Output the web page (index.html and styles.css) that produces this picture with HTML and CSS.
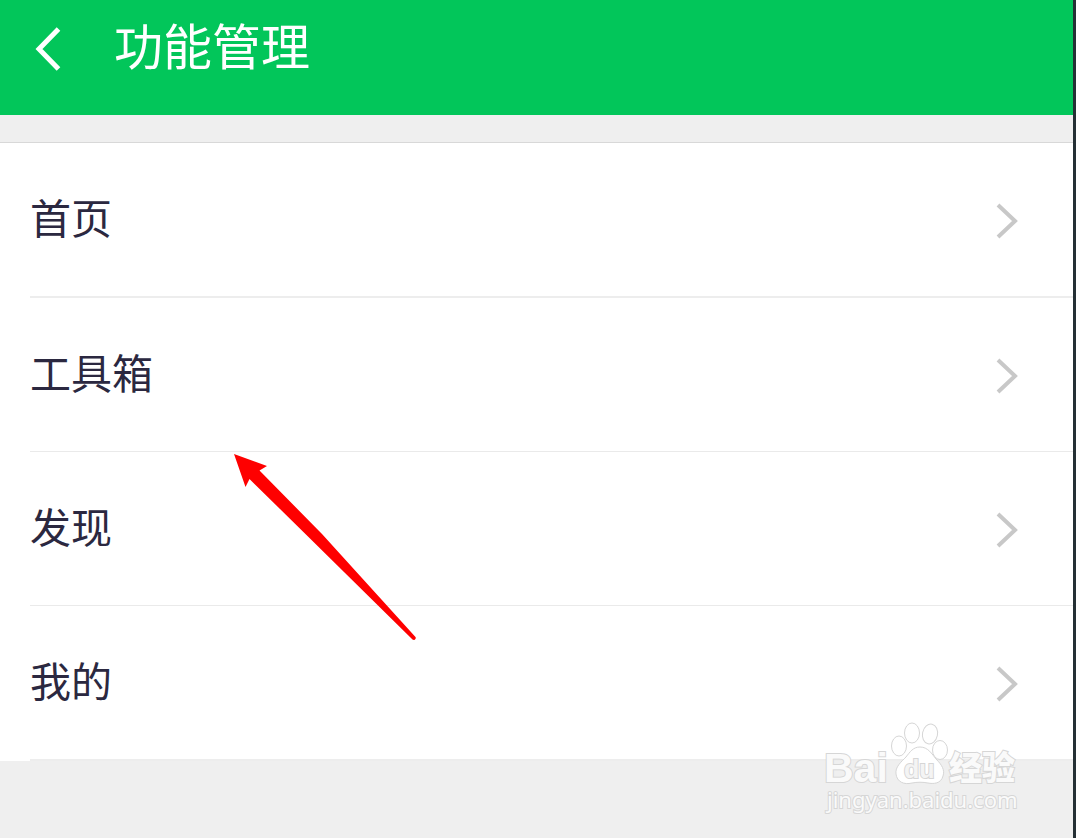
FILE: index.html
```html
<!DOCTYPE html>
<html lang="zh-CN">
<head>
<meta charset="utf-8">
<title>功能管理</title>
<meta name="viewport" content="width=device-width, initial-scale=1">
<link rel="stylesheet" href="styles.css">
</head>
<body>
<div class="screen">
  <header class="header">
    <button class="back" type="button" aria-label="返回">
      <svg width="28" height="46" viewBox="0 0 28 46" aria-hidden="true"><path d="M24.500 3 L5 23 L24.500 43"/></svg>
    </button>
    <h1 class="title">功能管理</h1>
  </header>
  <main>
    <ul class="list">
      <li class="item"><a class="link" href="#home"><span class="label">首页</span><svg class="chevron" width="24" height="38" viewBox="0 0 24 38" aria-hidden="true"><path d="M3 4 L20 20 L3 36"/></svg></a></li>
      <li class="item"><a class="link" href="#tools"><span class="label">工具箱</span><svg class="chevron" width="24" height="38" viewBox="0 0 24 38" aria-hidden="true"><path d="M3 4 L20 20 L3 36"/></svg></a></li>
      <li class="item"><a class="link" href="#discover"><span class="label">发现</span><svg class="chevron" width="24" height="38" viewBox="0 0 24 38" aria-hidden="true"><path d="M3 4 L20 20 L3 36"/></svg></a></li>
      <li class="item"><a class="link" href="#mine"><span class="label">我的</span><svg class="chevron" width="24" height="38" viewBox="0 0 24 38" aria-hidden="true"><path d="M3 4 L20 20 L3 36"/></svg></a></li>
    </ul>
  </main>
  <svg class="pointer" width="184" height="188" viewBox="0 0 184 188" aria-hidden="true">
    <path d="M0 0 L33 12 L25.500 16.500 L88 80 L181.500 183 A2 2 0 0 1 178.500 185.500 L76 84.500 L15.500 25 L11.500 33 Z"/>
  </svg>
  <svg class="watermark" width="200" height="100" viewBox="0 0 200 100" role="img" aria-label="Baidu 经验">
    <g class="mark">
      <ellipse cx="77" cy="26" rx="7.500" ry="10"/>
      <ellipse cx="90" cy="13" rx="7.500" ry="10"/>
      <ellipse cx="108" cy="14" rx="7.500" ry="10" transform="rotate(12 108 14)"/>
      <ellipse cx="118" cy="30" rx="7.500" ry="9.500"/>
      <path d="M98 27 C106 27 110 34 114 39 C120 45 123 50 121 56 C119 64 111 64 106 63 C101 62 95 62 90 63 C82 65 75 62 74 54 C73 47 79 42 84 37 C88 32 91 27 98 27 Z"/>
      <text class="brand" x="2" y="62">Bai</text>
      <text class="du" x="82" y="58">du</text>
      <text class="cn" x="127" y="60">经验</text>
      <text class="site" x="5" y="88">jingyan.baidu.com</text>
    </g>
  </svg>
</div>
</body>
</html>
```
FILE: styles.css
```css
* {
  box-sizing: border-box;
}

body {
  margin: 0;
  background: #efefef;
  font-family: "Noto Sans CJK SC", "Liberation Sans", sans-serif;
}

.screen {
  position: relative;
  min-height: 100vh;
  overflow: hidden;
  border-right: 3px solid #253035;
}

.header {
  display: flex;
  align-items: flex-start;
  gap: 52px;
  padding: 8px 34px 35px;
  background: #02c65a;
}

.back {
  display: flex;
  margin-top: 18px;
  padding: 0;
  border: 0;
  background: none;
}

.back path {
  fill: none;
  stroke: #fff;
  stroke-width: 5;
}

.title {
  margin: 0;
  color: #fff;
  font-size: 49px;
  font-weight: 400;
  line-height: 72px;
}

.list {
  margin: 27px 0 0;
  padding: 0;
  border-top: 1px solid #d8d8d8;
  background: #fff;
  list-style: none;
}

.item {
  margin-left: 30px;
  border-bottom: 1px solid #eaeaea;
}

.item:first-child,
.item:last-child {
  border-bottom: 2px solid #ededed;
}

.link {
  display: flex;
  align-items: center;
  justify-content: space-between;
  height: 153px;
  padding-right: 54px;
  color: #2b2840;
  font-size: 41px;
  line-height: 60px;
  text-decoration: none;
}

.label {
  padding-bottom: 8px;
}

.chevron path {
  fill: none;
  stroke: #c8c8c8;
  stroke-width: 4;
}

.pointer {
  position: absolute;
  left: 234px;
  top: 454px;
  fill: #fe0000;
}

.watermark {
  position: absolute;
  right: 51px;
  bottom: 18px;
}

.mark {
  fill: #fff;
  stroke: #d6d6d6;
  stroke-width: 1;
}

.mark text {
  fill: #fafafa;
  stroke-width: 2;
  paint-order: stroke;
}

.brand {
  font: 700 41px "Liberation Sans", sans-serif;
}

.mark .du {
  fill: #f4f4f4;
  font: 700 25px "Liberation Sans", sans-serif;
}

.cn {
  font: 900 33px "Noto Sans CJK SC", sans-serif;
}

.site {
  font: 400 22px "Noto Sans", sans-serif;
}
```
